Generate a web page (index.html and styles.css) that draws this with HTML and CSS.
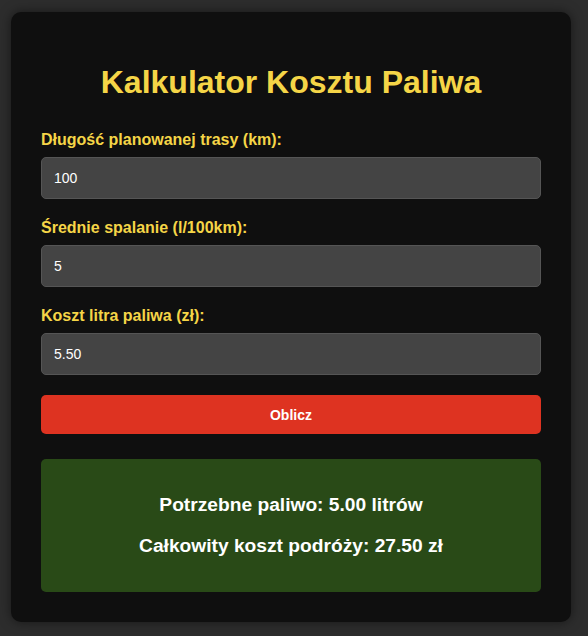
FILE: index.html
```html
<!DOCTYPE html>
<html lang="pl">
<head>
<meta charset="utf-8">
<title>Kalkulator Kosztu Paliwa</title>
<link rel="stylesheet" href="styles.css">
</head>
<body>
<div class="container">
  <h1 class="title">Kalkulator Kosztu Paliwa</h1>
  <div class="form-group">
    <label class="label" for="distance">Długość planowanej trasy (km):</label>
    <input class="input" id="distance" type="text" value="100">
  </div>
  <div class="form-group">
    <label class="label" for="consumption">Średnie spalanie (l/100km):</label>
    <input class="input" id="consumption" type="text" value="5">
  </div>
  <div class="form-group">
    <label class="label" for="price">Koszt litra paliwa (zł):</label>
    <input class="input" id="price" type="text" value="5.50">
  </div>
  <button class="button" type="button">Oblicz</button>
  <div class="result">
    <p class="result-line">Potrzebne paliwo: 5.00 litrów</p>
    <p class="result-line">Całkowity koszt podróży: 27.50 zł</p>
  </div>
</div>
</body>
</html>
```
FILE: styles.css
```css
html, body {
  margin: 0;
  padding: 0;
}
body {
  background: #2d2d2d;
  font-family: "Liberation Sans", Arial, sans-serif;
  padding: 12px 17px 15px 11px;
}
.container {
  background: #0f0f0f;
  border-radius: 10px;
  padding: 30px;
  box-shadow: 0 0 12px rgba(0, 0, 0, 0.5);
}
.title {
  color: #f5d547;
  font-size: 32px;
  font-weight: bold;
  text-align: center;
  margin: 22px 0 30px;
}
.form-group {
  margin-bottom: 20px;
}
.label {
  display: block;
  color: #f5d547;
  font-weight: bold;
  font-size: 16px;
  margin-bottom: 8px;
}
.input {
  display: block;
  box-sizing: border-box;
  width: 100%;
  height: 42px;
  padding: 12px;
  font-family: "Liberation Sans", Arial, sans-serif;
  font-size: 14px;
  color: #ffffff;
  background: #444444;
  border: 1px solid #555555;
  border-radius: 5px;
  outline: none;
}
.button {
  display: block;
  width: 100%;
  height: 39px;
  border: none;
  border-radius: 5px;
  background: #de3321;
  color: #ffffff;
  font-family: "Liberation Sans", Arial, sans-serif;
  font-weight: bold;
  font-size: 14px;
}
.result {
  margin-top: 25px;
  background: #294a17;
  border-radius: 5px;
  padding: 16px;
  text-align: center;
}
.result-line {
  color: #ffffff;
  font-weight: bold;
  font-size: 19.2px;
  margin: 19px 0;
}
```
